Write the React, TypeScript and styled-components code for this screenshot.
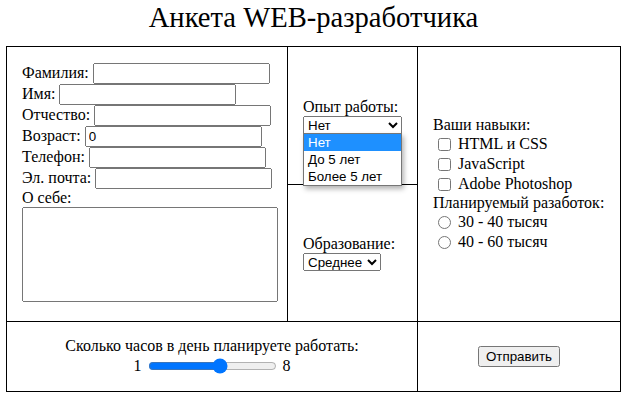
import styled, { createGlobalStyle } from "styled-components";

const GlobalStyle = createGlobalStyle`
  body {
    margin: 0;
    font-family: "Liberation Serif", "Times New Roman", serif;
    font-size: 16px;
    color: #000;
    background: #fff;
  }
`;

const Page = styled.div`
  width: 615px;
  margin-left: 6px;
`;

const Title = styled.h1`
  margin: 0 0 10px;
  font-size: 28.6px;
  font-weight: normal;
  line-height: 36px;
  text-align: center;
`;

const Form = styled.form`
  display: grid;
  grid-template-columns: 280px 129px 202px;
  grid-template-rows: 137px 136px 69px;
  gap: 1px;
  padding: 1px;
  background: #000;
`;

const Cell = styled.div<{ $col?: string; $row?: string; $center?: boolean }>`
  grid-column: ${(p) => p.$col ?? "auto"};
  grid-row: ${(p) => p.$row ?? "auto"};
  background: #fff;
  display: flex;
  flex-direction: column;
  justify-content: center;
  align-items: ${(p) => (p.$center ? "center" : "flex-start")};
  padding-left: ${(p) => (p.$center ? "0" : "15px")};
  position: relative;
`;

const Field = styled.label`
  display: flex;
  align-items: center;
  gap: 4px;
  height: 21px;
  line-height: 18px;
`;

const TextInput = styled.input`
  box-sizing: border-box;
  width: 177px;
  height: 21px;
  margin: 0;
  font-family: "Liberation Sans", Arial, sans-serif;
  font-size: 13.33px;
`;

const Caption = styled.div`
  line-height: 18px;
`;

const About = styled.textarea`
  box-sizing: border-box;
  width: 256px;
  height: 95px;
  margin: 0 0 4px;
  resize: none;
  font-family: "Liberation Mono", monospace;
  font-size: 13.33px;
`;

const Select = styled.select<{ $w: number }>`
  box-sizing: border-box;
  width: ${(p) => p.$w}px;
  height: 18px;
  margin: 0;
  font-family: "Liberation Sans", Arial, sans-serif;
  font-size: 13.33px;
`;

const SelectWrap = styled.div`
  position: relative;
  height: 18px;
`;

const Options = styled.ul`
  position: absolute;
  top: 17px;
  left: 0;
  z-index: 10;
  width: 99px;
  box-sizing: border-box;
  margin: 0;
  padding: 0;
  list-style: none;
  background: #fff;
  border: 1px solid #767676;
  box-shadow: 2px 3px 5px rgba(0, 0, 0, 0.3);
  font-family: "Liberation Sans", Arial, sans-serif;
  font-size: 13.33px;
`;

const Option = styled.li<{ $active?: boolean }>`
  height: 17px;
  line-height: 17px;
  padding-left: 4px;
  background: ${(p) => (p.$active ? "#1e90ff" : "#fff")};
  color: ${(p) => (p.$active ? "#fff" : "#000")};
`;

const Choice = styled.label`
  display: flex;
  align-items: center;
  height: 20px;
  line-height: 18px;

  input {
    width: 13px;
    height: 13px;
    margin: 3px 7px 3px 5px;
  }
`;

const SliderRow = styled.div`
  display: flex;
  align-items: center;
  gap: 4px;
  height: 22px;

  input {
    width: 129px;
    margin: 2px;
  }
`;

const SubmitButton = styled.button`
  font-family: "Liberation Sans", Arial, sans-serif;
  font-size: 13.33px;
  margin: 0;
`;

const fields = ["Фамилия:", "Имя:", "Отчество:", "Возраст:", "Телефон:", "Эл. почта:"];

export default function App() {
  return (
    <Page>
      <GlobalStyle />
      <Title>Анкета WEB-разработчика</Title>
      <Form onSubmit={(e) => e.preventDefault()}>
        <Cell $col="1" $row="1 / 3">
          {fields.map((name) => (
            <Field key={name}>
              {name}
              <TextInput
                type={name === "Возраст:" ? "number" : "text"}
                defaultValue={name === "Возраст:" ? "0" : ""}
              />
            </Field>
          ))}
          <Caption>О себе:</Caption>
          <About />
        </Cell>

        <Cell $col="2" $row="1">
          <Caption>Опыт работы:</Caption>
          <SelectWrap>
            <Select $w={99} defaultValue="none">
              <option value="none">Нет</option>
              <option value="5">До 5 лет</option>
              <option value="more">Более 5 лет</option>
            </Select>
            <Options>
              <Option $active>Нет</Option>
              <Option>До 5 лет</Option>
              <Option>Более 5 лет</Option>
            </Options>
          </SelectWrap>
        </Cell>

        <Cell $col="3" $row="1 / 3">
          <Caption>Ваши навыки:</Caption>
          <Choice><input type="checkbox" />HTML и CSS</Choice>
          <Choice><input type="checkbox" />JavaScript</Choice>
          <Choice><input type="checkbox" />Adobe Photoshop</Choice>
          <Caption>Планируемый разаботок:</Caption>
          <Choice><input type="radio" name="salary" />30 - 40 тысяч</Choice>
          <Choice><input type="radio" name="salary" />40 - 60 тысяч</Choice>
        </Cell>

        <Cell $col="2" $row="2">
          <Caption>Образование:</Caption>
          <Select $w={78} defaultValue="mid">
            <option value="mid">Среднее</option>
            <option value="high">Высшее</option>
          </Select>
        </Cell>

        <Cell $col="1 / 3" $row="3" $center>
          <Caption>Сколько часов в день планируете работать:</Caption>
          <SliderRow>
            1
            <input type="range" min={1} max={8} defaultValue={5} />
            8
          </SliderRow>
        </Cell>

        <Cell $col="3" $row="3" $center>
          <SubmitButton type="submit">Отправить</SubmitButton>
        </Cell>
      </Form>
    </Page>
  );
}
